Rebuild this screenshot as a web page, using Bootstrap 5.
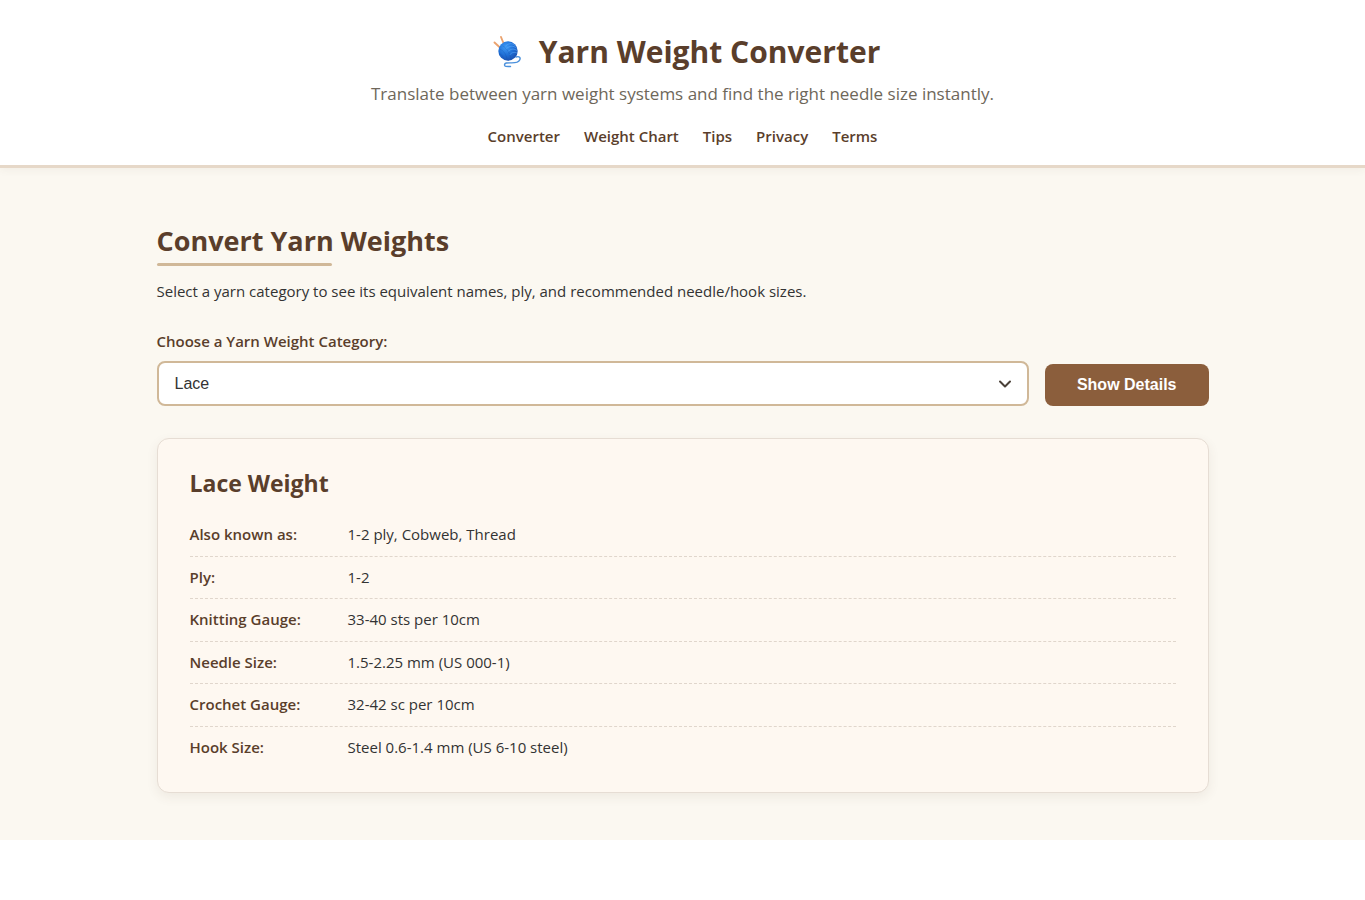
<!DOCTYPE html>
<html lang="en">
<head>
<meta charset="utf-8">
<meta name="viewport" content="width=device-width, initial-scale=1">
<title>Yarn Weight Converter</title>
<link href="https://cdn.jsdelivr.net/npm/bootstrap@5.3.0/dist/css/bootstrap.min.css" rel="stylesheet">
<style>
  body { font-family: "Open Sans", sans-serif; font-size: 15px; line-height: 1.7; color: #333; background: #fff; }
  h1, h2, h3, label, dt, .site-nav a { color: #5a3e2b; }
  h1, h2, h3 { font-weight: 700; }
  label, dt, .site-nav a { font-weight: 600; }
  .site-header { padding: 24px 24px 16px; border-bottom: 3px solid #e6d8c8; box-shadow: 0 2px 8px rgba(92, 64, 51, .06); z-index: 1; }
  .site-header h1 { font-size: 30px; line-height: 56px; gap: 14px; }
  .yarn-icon { width: 40px; height: 34px; }
  .tagline { font-size: 17px; line-height: 28px; margin-bottom: 15px; color: #6e675a; }
  .site-nav { gap: 4px 24px; line-height: 26px; }
  .converter { background: #fbf8f1; padding: 48px 0 47px; }
  .page-width { max-width: 1100px; padding: 0 24px; }
  .converter h2 { font-size: 27px; line-height: 50px; margin-bottom: 13px; }
  .converter h2::after { content: ""; position: absolute; left: 0; bottom: 0; width: 60%; height: 3px; border-radius: 2px; background: #d0b898; }
  .converter label { margin-bottom: 7px; }
  .weight-select {
    background-image: url("data:image/svg+xml,%3csvg xmlns='http://www.w3.org/2000/svg' viewBox='0 0 16 16'%3e%3cpath fill='none' stroke='%234a4038' stroke-linecap='round' stroke-linejoin='round' stroke-width='2' d='m3 5.5 5 5 5-5'/%3e%3c/svg%3e");
    background-position: right 14px center; background-size: 16px 16px; height: 45px; border: 2px solid #d0b898; border-radius: 8px; padding: 8px 44px 8px 16px; font: 16px "Liberation Sans", sans-serif; color: #333; }
  .btn-yarn { --bs-btn-color: #fff; --bs-btn-bg: #8b5e3c; --bs-btn-hover-color: #fff; --bs-btn-hover-bg: #704a2e; --bs-btn-active-bg: #5c4033; --bs-btn-active-color: #fff;
    height: 42px; padding: 0 32px; border: 0; border-radius: 8px; font: 700 16px "Liberation Sans", sans-serif; }
  .result { margin-top: 32px; padding: 24px 32px; background: #fef8f1; border: 1px solid #e6ddd4; border-radius: 12px; box-shadow: 0 4px 12px rgba(92, 64, 51, .08); }
  .result h3 { font-size: 23px; line-height: 40px; margin-bottom: 11px; }
  .detail { padding: 8px 0; border-bottom: 1px dashed #e0d6cc; }
  .detail:last-child { border-bottom: 0; }
  .detail dt { flex: 0 0 158px; }
</style>
</head>
<body>
<header class="site-header position-relative bg-white text-center">
  <h1 class="d-flex justify-content-center align-items-center mb-0">
    <svg class="yarn-icon" viewBox="-6 0 40 34" aria-hidden="true">
      <defs><radialGradient id="ball" cx=".38" cy=".3" r=".75"><stop offset="0" stop-color="#3f9af5"/><stop offset=".55" stop-color="#1f6fd6"/><stop offset="1" stop-color="#1a4fae"/></radialGradient></defs>
      <g fill="none" stroke-linecap="round">
        <path d="M3.500 7.500 10 13.500M10 2l4 10" stroke="#eba36f" stroke-width="1.900"/>
        <path d="M25 22c3.500-1.300 4.800.8 3.700 3-1.500 3-4.700 3-8.700 2.900-4-.1-6.300-.2-6.500 2-.1 1.800 1.800 1.700 6 1.600" stroke="#4a90dc" stroke-width="1.400"/>
        <circle cx="17" cy="16" r="9.700" fill="url(#ball)"/>
        <path d="M15 10.500c4-3 6.500-2 9 0M15.500 13.500c3.500-3 6.500-3 10-.5M17 16.500c3-3 6-3 9-1M19 19.500c2-2.500 4.500-2.500 7-1.500" stroke="#67b4ff" stroke-width=".9" opacity=".55"/>
        <path d="M9.500 14.500c3 1 6 5 6.500 10M12 11c4 2.500 7 7 8 13.500M8.500 18.500c2 1 3.500 3 4 5" stroke="#154b9f" stroke-width=".8" opacity=".3"/>
      </g>
    </svg>
    <span>Yarn Weight Converter</span>
  </h1>
  <p class="tagline">Translate between yarn weight systems and find the right needle size instantly.</p>
  <nav class="site-nav d-flex flex-wrap justify-content-center">
    <a class="text-decoration-none" href="#converter">Converter</a>
    <a class="text-decoration-none" href="#chart">Weight Chart</a>
    <a class="text-decoration-none" href="#tips">Tips</a>
    <a class="text-decoration-none" href="#privacy">Privacy</a>
    <a class="text-decoration-none" href="#terms">Terms</a>
  </nav>
</header>
<main>
  <section class="converter" id="converter">
    <div class="page-width mx-auto">
      <h2 class="d-table position-relative">Convert Yarn Weights</h2>
      <p class="mb-4">Select a yarn category to see its equivalent names, ply, and recommended needle/hook sizes.</p>
      <form class="d-flex flex-wrap align-items-end gap-3" onsubmit="return false">
        <div class="flex-grow-1">
          <label class="d-block" for="weight">Choose a Yarn Weight Category:</label>
          <select class="form-select weight-select" id="weight">
            <option>Lace</option>
            <option>Fingering</option>
            <option>Sport</option>
            <option>DK</option>
            <option>Worsted</option>
            <option>Bulky</option>
          </select>
        </div>
        <button class="btn btn-yarn" type="submit">Show Details</button>
      </form>
      <article class="result">
        <h3>Lace Weight</h3>
        <dl class="mb-0">
          <div class="detail d-flex"><dt>Also known as:</dt><dd class="mb-0">1-2 ply, Cobweb, Thread</dd></div>
          <div class="detail d-flex"><dt>Ply:</dt><dd class="mb-0">1-2</dd></div>
          <div class="detail d-flex"><dt>Knitting Gauge:</dt><dd class="mb-0">33-40 sts per 10cm</dd></div>
          <div class="detail d-flex"><dt>Needle Size:</dt><dd class="mb-0">1.5-2.25 mm (US 000-1)</dd></div>
          <div class="detail d-flex"><dt>Crochet Gauge:</dt><dd class="mb-0">32-42 sc per 10cm</dd></div>
          <div class="detail d-flex"><dt>Hook Size:</dt><dd class="mb-0">Steel 0.6-1.4 mm (US 6-10 steel)</dd></div>
        </dl>
      </article>
    </div>
  </section>
</main>
<script src="https://cdn.jsdelivr.net/npm/bootstrap@5.3.0/dist/js/bootstrap.bundle.min.js"></script>
</body>
</html>
